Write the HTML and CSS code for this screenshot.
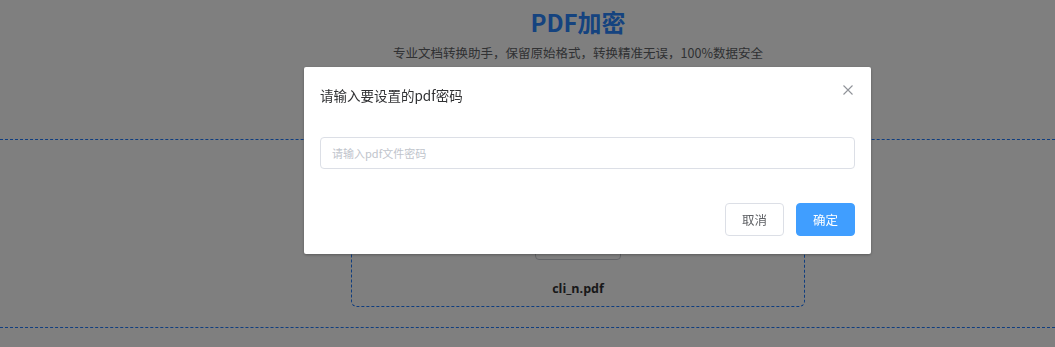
FILE: index.html
```html
<!DOCTYPE html>
<html lang="zh-CN">
<head>
<meta charset="utf-8">
<title>PDF加密</title>
<link rel="stylesheet" href="styles.css">
</head>
<body>
<div class="page">
  <header class="hero">
    <h1 class="hero-title">PDF加密</h1>
    <p class="hero-sub">专业文档转换助手，保留原始格式，转换精准无误，100%数据安全</p>
  </header>
  <section class="upload-zone">
    <div class="file-card">
      <button class="file-btn" type="button">重新选择</button>
      <div class="file-name">cli_n.pdf</div>
    </div>
  </section>
</div>

<div class="overlay">
  <div class="dialog">
    <div class="dialog-header">
      <span class="dialog-title">请输入要设置的pdf密码</span>
      <button class="dialog-close" type="button" aria-label="关闭">
        <svg width="10" height="10" viewBox="0 0 10 10"><path d="M0.5 0.5 L9.5 9.5 M9.5 0.5 L0.5 9.5" stroke="#909399" stroke-width="1.1" fill="none"/></svg>
      </button>
    </div>
    <div class="dialog-body">
      <input class="pwd-input" type="password" placeholder="请输入pdf文件密码">
    </div>
    <div class="dialog-footer">
      <button class="btn btn-default" type="button">取消</button>
      <button class="btn btn-primary" type="button">确定</button>
    </div>
  </div>
</div>
</body>
</html>
```
FILE: styles.css
```css
* { box-sizing: border-box; }
html, body {
  margin: 0;
  padding: 0;
  background: #ffffff;
  font-family: "Noto Sans CJK SC", "Noto Sans", sans-serif;
  height: 100%;
  overflow: hidden;
}
.page {
  width: 1055px;
}
.hero {
  padding-left: 101px;
  text-align: center;
}
.hero-title {
  margin: 0;
  padding-top: 6px;
  font-size: 24px;
  line-height: 32px;
  font-weight: 700;
  color: #2a86ff;
}
.hero-sub {
  margin: 5px 0 0;
  font-size: 12.5px;
  line-height: 20px;
  color: #606266;
}
.upload-zone {
  margin-top: 76px;
  border-top: 1px dashed #1f7bff;
  border-bottom: 1px dashed #1f7bff;
  padding: 20px 0 20px 101px;
  display: flex;
  justify-content: center;
}
.file-card {
  width: 454px;
  height: 147px;
  border: 1px dashed #1f7bff;
  border-radius: 6px;
  display: flex;
  flex-direction: column;
  align-items: center;
  justify-content: flex-end;
  padding-bottom: 7px;
}
.file-btn {
  width: 86px;
  height: 32px;
  border: 1px solid #c9cbd1;
  border-radius: 4px;
  background: #fff;
  font-family: inherit;
  font-size: 13px;
  color: #606266;
  margin-left: -1px;
}
.file-name {
  margin-top: 19px;
  font-family: "Open Sans", "Noto Sans", sans-serif;
  font-size: 12.5px;
  line-height: 20px;
  font-weight: 700;
  color: #303133;
}

.overlay {
  position: fixed;
  inset: 0;
  background: rgba(0, 0, 0, 0.5);
}
.dialog {
  position: absolute;
  left: 304px;
  top: 67px;
  width: 567px;
  height: 187px;
  background: #ffffff;
  border-radius: 2px;
  box-shadow: 0 1px 3px rgba(0, 0, 0, 0.3);
  display: flex;
  flex-direction: column;
}
.dialog-header {
  position: relative;
  padding: 16px 16px 0;
  height: 40px;
}
.dialog-title {
  display: block;
  font-size: 13.5px;
  line-height: 24px;
  color: #303133;
}
.dialog-close {
  position: absolute;
  top: 18px;
  right: 18px;
  width: 10px;
  height: 10px;
  padding: 0;
  border: 0;
  background: none;
  display: flex;
}
.dialog-body {
  padding: 30px 16px 0;
}
.pwd-input {
  display: block;
  width: 100%;
  height: 32px;
  border: 1px solid #dcdfe6;
  border-radius: 4px;
  padding: 0 11px;
  font-family: inherit;
  font-size: 11px;
  color: #606266;
  outline: none;
}
.pwd-input::placeholder {
  color: #c0c4cc;
}
.dialog-footer {
  padding: 34px 16px 18px;
  display: flex;
  justify-content: flex-end;
  gap: 12px;
}
.btn {
  height: 33px;
  width: 59px;
  border-radius: 4px;
  font-family: inherit;
  font-size: 12.5px;
  padding: 0;
}
.btn-default {
  background: #ffffff;
  border: 1px solid #dcdfe6;
  color: #606266;
}
.btn-primary {
  background: #409eff;
  border: 1px solid #409eff;
  color: #ffffff;
}
```
